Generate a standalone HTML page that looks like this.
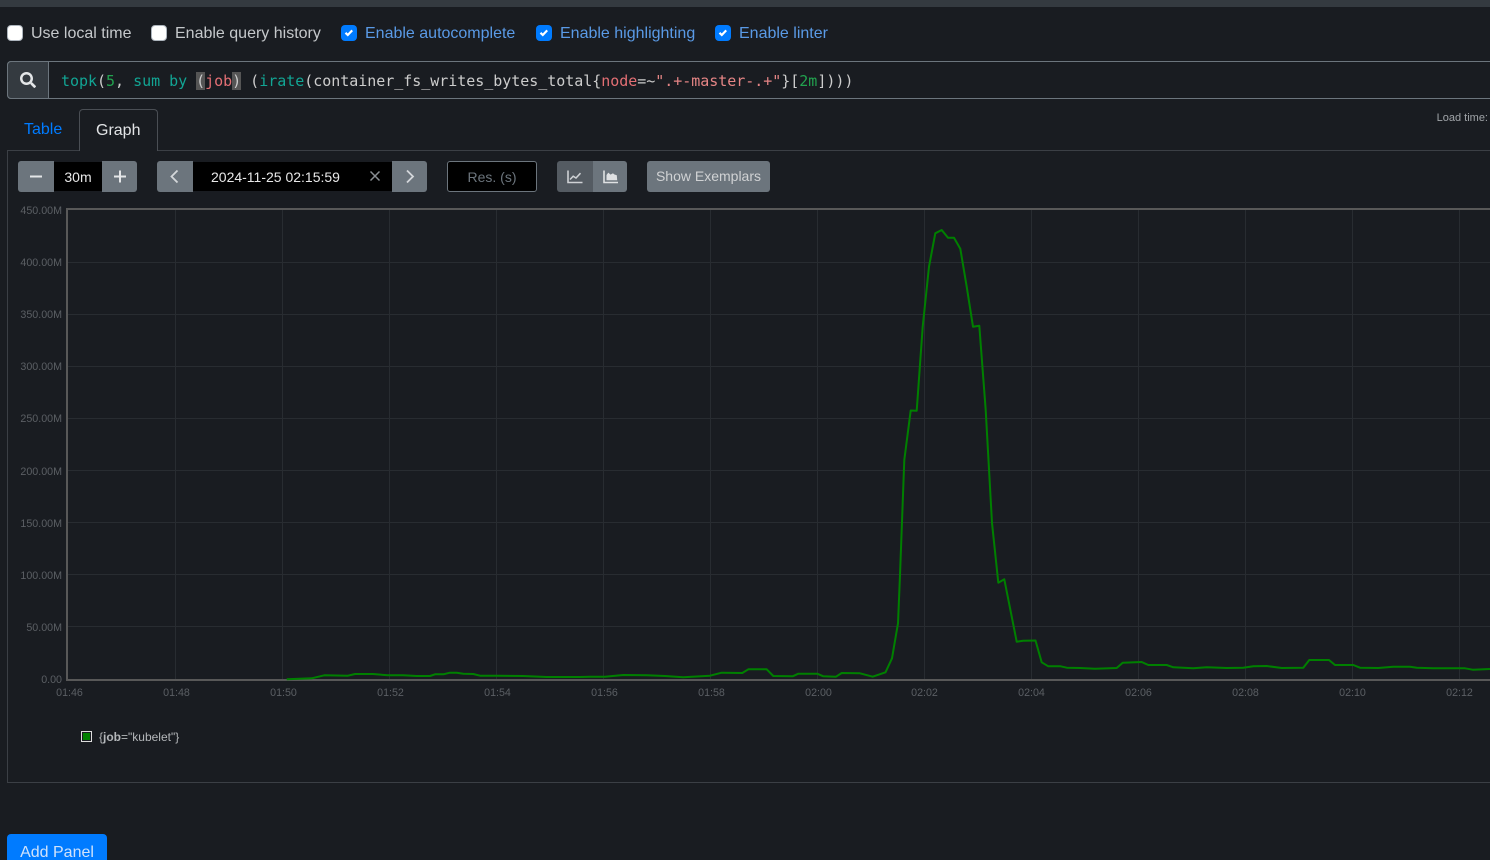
<!DOCTYPE html>
<html><head><meta charset="utf-8"><style>
html,body{margin:0;padding:0;width:1490px;height:860px;overflow:hidden;background:#191c21;font-family:"Liberation Sans",sans-serif;}
body{position:relative}
.a{position:absolute;white-space:nowrap}
.lb{font-size:16px;line-height:20px;top:24px}
.cb{position:absolute;top:25px;width:16px;height:16px;border-radius:4px;box-sizing:border-box}
.off{background:#fff;border:1px solid #adb5bd}
.on{background:#007bff}
.btn{position:absolute;top:161px;height:31px;background:#6c757d}
.q{position:absolute;left:61px;top:71px;font:15px/20px "DejaVu Sans Mono",monospace;letter-spacing:-0.03px;color:#ccc;white-space:pre}
.t{color:#12a594}.n{color:#22a34f}.r{color:#e36f74}.s{color:#e58585}
.hl{background:#555}
</style></head><body>
<div class="a" style="left:0;top:0;width:1490px;height:7px;background:#343a40"></div>

<div class="cb off" style="left:7px"></div><div class="a lb" style="left:31px;color:#c5c8cb">Use local time</div>
<div class="cb off" style="left:151px"></div><div class="a lb" style="left:175px;color:#c5c8cb">Enable query history</div>
<div class="cb on" style="left:341px"><svg style="display:block" width="16" height="16" viewBox="0 0 16 16"><path d="M4.5 7.8l2.3 2.2 4.4-4.6" fill="none" stroke="#fff" stroke-width="2.2"/></svg></div><div class="a lb" style="left:365px;color:#5a9ae6">Enable autocomplete</div>
<div class="cb on" style="left:536px"><svg style="display:block" width="16" height="16" viewBox="0 0 16 16"><path d="M4.5 7.8l2.3 2.2 4.4-4.6" fill="none" stroke="#fff" stroke-width="2.2"/></svg></div><div class="a lb" style="left:560px;color:#5a9ae6">Enable highlighting</div>
<div class="cb on" style="left:715px"><svg style="display:block" width="16" height="16" viewBox="0 0 16 16"><path d="M4.5 7.8l2.3 2.2 4.4-4.6" fill="none" stroke="#fff" stroke-width="2.2"/></svg></div><div class="a lb" style="left:739px;color:#5a9ae6">Enable linter</div>

<div class="a" style="left:7px;top:61px;width:1483px;height:38px;box-sizing:border-box;border:1px solid #6c757d;border-right:none;border-radius:4px 0 0 4px"></div>
<div class="a" style="left:7px;top:61px;width:42px;height:38px;box-sizing:border-box;background:#343a40;border:1px solid #6c757d;border-radius:4px 0 0 4px"></div>
<svg class="a" style="left:20px;top:72px" width="16" height="16" viewBox="0 0 512 512"><path fill="#e4e6e8" d="M505 442.7L405.3 343c-4.5-4.5-10.6-7-17-7H372c27.6-35.3 44-79.7 44-128C416 93.1 322.9 0 208 0S0 93.1 0 208s93.1 208 208 208c48.3 0 92.7-16.4 128-44v16.3c0 6.4 2.5 12.5 7 17l99.7 99.7c9.4 9.4 24.6 9.4 33.9 0l28.3-28.3c9.4-9.4 9.4-24.6.1-34zM208 336c-70.7 0-128-57.2-128-128 0-70.7 57.2-128 128-128 70.7 0 128 57.2 128 128 0 70.7-57.2 128-128 128z"/></svg>
<div class="q"><span class="t">topk</span>(<span class="n">5</span>, <span class="t">sum</span> <span class="t">by</span> <span class="hl">(</span><span class="r">job</span><span class="hl">)</span> (<span class="t">irate</span>(container_fs_writes_bytes_total{<span class="r">node</span>=~<span class="s">".+-master-.+"</span>}[<span class="n">2m</span>])))</div>

<div class="a" style="left:24px;top:120px;font-size:16px;line-height:20px;color:#007bff">Table</div>
<div class="a" style="left:7px;top:150px;width:1483px;height:633px;box-sizing:border-box;border:1px solid #3b3f45;border-right:none"></div>
<div class="a" style="left:79px;top:109px;width:79px;height:42px;box-sizing:border-box;background:#191c21;border:1px solid #4a4e54;border-bottom:none;border-radius:4px 4px 0 0"></div>
<div class="a" style="left:96px;top:121px;font-size:16px;line-height:20px;color:#e2e4e6">Graph</div>
<div class="a" style="right:2px;top:111px;font-size:11px;line-height:15px;color:#a0a4a8">Load time:</div>

<div class="btn" style="left:18px;width:36px;border-radius:3px 0 0 3px"><svg style="display:block" width="36" height="31"><path d="M12 15.5h12" stroke="#e4e6e8" stroke-width="2"/></svg></div>
<div class="a" style="left:54px;top:162px;width:48px;height:29px;background:#000;color:#e8e8e8;font-size:14px;line-height:30px;text-align:center">30m</div>
<div class="btn" style="left:102px;width:35px;border-radius:0 3px 3px 0"><svg style="display:block" width="35" height="31"><path d="M12 15.5h12M18 9.5v12" stroke="#e4e6e8" stroke-width="2"/></svg></div>

<div class="btn" style="left:157px;width:36px;border-radius:3px 0 0 3px"><svg style="display:block" width="36" height="31"><path d="M20.5 9.5l-6 6 6 6" fill="none" stroke="#d4d7da" stroke-width="1.8"/></svg></div>
<div class="a" style="left:193px;top:162px;width:199px;height:29px;background:#000"></div>
<div class="a" style="left:211px;top:162px;color:#e8e8e8;font-size:14px;line-height:30px">2024-11-25 02:15:59</div>
<svg class="a" style="left:369px;top:170px" width="12" height="12"><path d="M1.5 1.5l9 9M10.5 1.5l-9 9" stroke="#8a8f94" stroke-width="1.5"/></svg>
<div class="btn" style="left:392px;width:35px;border-radius:0 3px 3px 0"><svg style="display:block" width="35" height="31"><path d="M15 9.5l6 6-6 6" fill="none" stroke="#d4d7da" stroke-width="1.8"/></svg></div>

<div class="a" style="left:447px;top:161px;width:90px;height:31px;box-sizing:border-box;background:#000;border:1px solid #6c757d;border-radius:3px;color:#6c757d;font-size:14px;line-height:30px;text-align:center">Res. (s)</div>

<div class="btn" style="left:557px;width:36px;background:#545b62;border-radius:3px 0 0 3px"><svg style="margin:8.5px 0 0 10px;display:block" width="16" height="14" viewBox="0 0 16 14"><path d="M1 0.5V12.5H15.5" fill="none" stroke="#cfd2d5" stroke-width="1.6"/><path d="M3 9.5L6.2 6.2 9 8 13.5 3.2" fill="none" stroke="#cfd2d5" stroke-width="1.5"/></svg></div>
<div class="btn" style="left:593px;width:34px;border-radius:0 3px 3px 0"><svg style="margin:8.5px 0 0 9.5px;display:block" width="16" height="14" viewBox="0 0 16 14"><path d="M1 0.5V12.5H15" fill="none" stroke="#dfe1e3" stroke-width="1.6"/><path d="M3.5 10.3V5L5.3 2.6 7.6 4.6 10 3.2 11.2 4.4 13.8 5.2 14.2 10.3Z" fill="#dfe1e3"/></svg></div>
<div class="btn" style="left:647px;width:123px;border-radius:3px;color:#d0d2d4;font-size:14px;line-height:30px;text-align:center">Show Exemplars</div>

<svg class="a" style="left:0;top:200px" width="1490" height="510" viewBox="0 200 1490 510" font-family="Liberation Sans" font-size="10.7" fill="#5b5f64">
<g stroke="#282c31" stroke-width="1" fill="none">
<path d="M175.5 209V680M282.5 209V680M389.5 209V680M496.5 209V680M603.5 209V680M710.5 209V680M817.5 209V680M924.5 209V680M1031.5 209V680M1138.5 209V680M1245.5 209V680M1352.5 209V680M1459.5 209V680"/>
<path d="M67 262.5H1490M67 314.5H1490M67 366.5H1490M67 418.5H1490M67 470.5H1490M67 522.5H1490M67 574.5H1490M67 626.5H1490"/>
</g>
<path d="M67 209H1490M67 208V681M66 680H1490" stroke="#585858" stroke-width="2" fill="none"/>
<polyline fill="none" stroke="#008000" stroke-width="2" stroke-linejoin="round" points="286.7,679.2 311.7,678.3 324.3,675.3 348,675.7 355,674 373,674 388,675.3 403,675.3 416.7,676 430,676 435,674.3 443.3,674.3 450,672.7 456.7,672.7 463.3,673.7 473.3,674 480,675.7 496.7,675.7 523,676 546.7,677 580,677 590,676.7 605,676.7 623.3,675 646.7,675.3 665,676 683.3,677.3 710,675.7 721.7,672.7 742.3,673 748.3,669.3 766.7,669.3 773.3,676 792.7,676.3 798.3,673.7 817.3,673.7 823.3,676.3 836,676.7 841.7,673 860,673.3 872.7,676.7 885.5,672.3 892,658.3 898,623.3 900,575 904.3,460 910.7,410.5 916.7,410.7 922.7,326.7 929,266.7 935.3,233.3 941.7,230 948,237.7 954,237.7 960.3,248.7 966.7,286.7 973,326.7 979.3,325.7 985.7,410 992,523 998.3,582.7 1004.3,579.3 1016.7,641.7 1023,640.7 1035.5,640.5 1041.7,662.3 1048.3,666.3 1060.7,666.3 1066.7,667.7 1080,668 1095,668.7 1116.7,668 1122.7,662.7 1141.7,662 1148.3,665 1166.7,665 1173.3,667.3 1193.3,668.3 1206.7,667.3 1226.7,668 1243.3,667.7 1253.3,666.3 1266.7,666 1281.7,668 1303.3,667.7 1309.3,660 1329,660 1335,665 1353.3,665 1360,667.7 1378.3,668 1393.3,666.7 1410,666.7 1416.7,667.7 1433.3,668.3 1465,668.3 1472.7,669.7 1490,669"/>
<g text-anchor="end">
<text x="62" y="214">450.00M</text><text x="62" y="266">400.00M</text><text x="62" y="318">350.00M</text><text x="62" y="370">300.00M</text><text x="62" y="422">250.00M</text><text x="62" y="475">200.00M</text><text x="62" y="527">150.00M</text><text x="62" y="579">100.00M</text><text x="62" y="631">50.00M</text><text x="62" y="683">0.00</text>
</g>
<g text-anchor="middle">
<text x="69.5" y="696">01:46</text><text x="176.5" y="696">01:48</text><text x="283.5" y="696">01:50</text><text x="390.5" y="696">01:52</text><text x="497.5" y="696">01:54</text><text x="604.5" y="696">01:56</text><text x="711.5" y="696">01:58</text><text x="818.5" y="696">02:00</text><text x="924.5" y="696">02:02</text><text x="1031.5" y="696">02:04</text><text x="1138.5" y="696">02:06</text><text x="1245.5" y="696">02:08</text><text x="1352.5" y="696">02:10</text><text x="1459.5" y="696">02:12</text>
</g>
</svg>

<div class="a" style="left:81px;top:731px;width:11px;height:11px;box-sizing:border-box;border:1px solid #ddd;padding:1px"><div style="width:7px;height:7px;background:#008000"></div></div>
<div class="a" style="left:99px;top:730px;font-size:12px;line-height:14px;color:#b4b7ba">{<b>job</b>="kubelet"}</div>

<div class="a" style="left:7px;top:834px;width:100px;height:26px;overflow:hidden;background:#007bff;border-radius:4px 4px 0 0;color:#cfe2fb;font-size:16px;line-height:38px;text-align:center">Add Panel</div>
</body></html>
